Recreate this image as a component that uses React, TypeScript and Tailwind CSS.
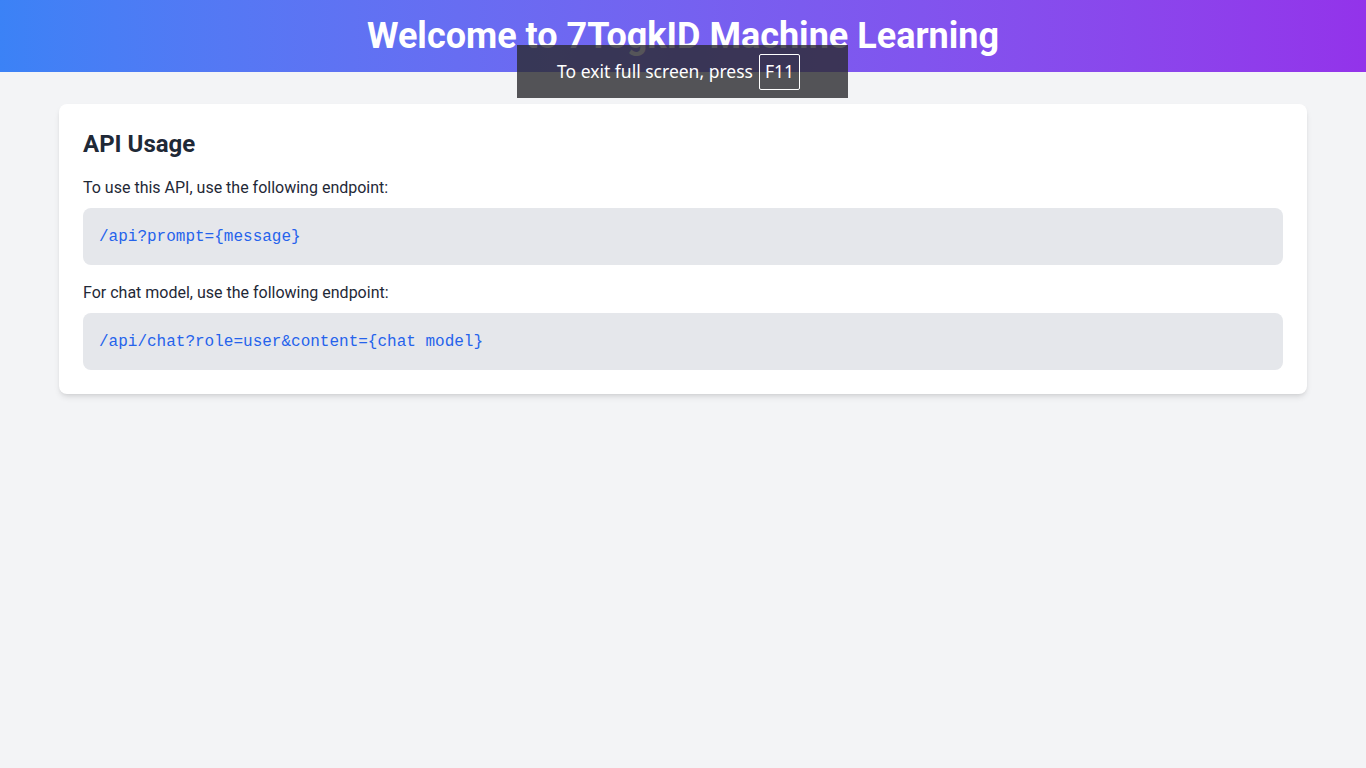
const endpoints = [
  { label: "To use this API, use the following endpoint:", code: "/api?prompt={message}" },
  { label: "For chat model, use the following endpoint:", code: "/api/chat?role=user&content={chat model}" },
];

export default function App() {
  return (
    <div className="relative min-h-screen bg-[#f3f4f6] font-['Roboto',sans-serif]">
      <header className="bg-gradient-to-r from-[#3b82f6] to-[#9333ea] py-4 text-center">
        <h1 className="text-4xl font-bold text-white">Welcome to 7TogkID Machine Learning</h1>
      </header>

      <main className="mx-auto max-w-[1280px] px-4 py-8">
        <div className="rounded-lg bg-white p-6 shadow-md">
          <h2 className="mb-4 text-2xl font-bold text-[#1f2937]">API Usage</h2>
          {endpoints.map((e, i) => (
            <div key={i} className={i === 0 ? "mb-4" : ""}>
              <p className="mb-2 text-[#1f2937]">{e.label}</p>
              <pre className="rounded-lg bg-[#e5e7eb] px-4 pt-[17px] pb-4 font-['Liberation_Mono',monospace] text-base leading-6 text-[#2563eb]">
                {e.code}
              </pre>
            </div>
          ))}
        </div>
      </main>

      {/* browser fullscreen hint */}
      <div className="absolute left-[517px] top-[45px] flex h-[53px] w-[331px] items-center gap-[6px] bg-[rgba(42,43,47,0.8)] pl-[40px] font-['Noto_Sans',sans-serif] text-[17.5px] text-white">
        <span>To exit full screen, press</span>
        <span className="flex h-[36px] items-center rounded-[2px] border border-white px-[5px]">F11</span>
      </div>
    </div>
  );
}
